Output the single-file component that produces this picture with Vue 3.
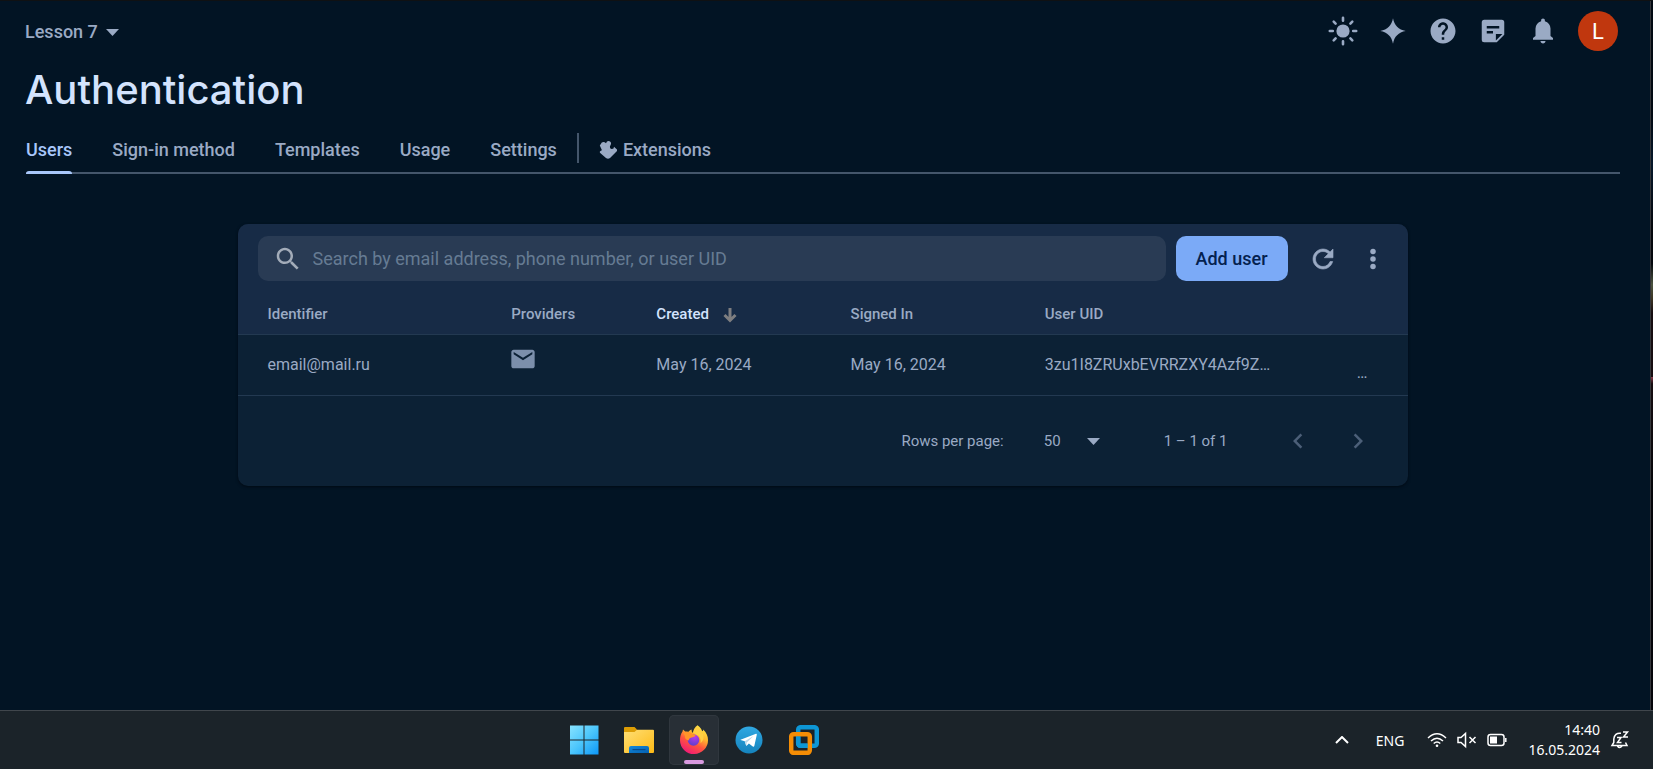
<script setup>
import { ref } from 'vue'

const tabs = ['Users', 'Sign-in method', 'Templates', 'Usage', 'Settings']
const activeTab = ref('Users')
const query = ref('')
const pageSize = ref(50)
const users = [
  { id: 'email@mail.ru', created: 'May 16, 2024', signedIn: 'May 16, 2024', uid: '3zu1I8ZRUxbEVRRZXY4Azf9Z…' },
]
</script>

<template>
  <div class="screen">
    <div class="window">
      <div class="page">
        <header class="topbar">
          <button class="project" type="button">
            Lesson 7
            <svg class="caret" viewBox="0 0 13 7" aria-hidden="true"><path d="M0 0h13L6.500 7z" /></svg>
          </button>
          <nav class="tools" aria-label="Tools">
            <button class="tool" type="button" aria-label="Theme">
              <svg viewBox="0 0 30 30">
                <circle cx="15" cy="15" r="6.600" />
                <path d="M15 1.800v3M15 25.200v3M1.800 15h3M25.200 15h3M5.700 5.700l1.900 1.900M22.400 22.400l1.900 1.900M5.700 24.300l1.900-1.900M22.400 7.600l1.900-1.900" fill="none" stroke="currentColor" stroke-width="2.600" stroke-linecap="round" />
              </svg>
            </button>
            <button class="tool" type="button" aria-label="Gemini">
              <svg viewBox="0 0 30 30"><path d="M15 2.300C16.300 9.500 20.500 13.700 27.700 15 20.500 16.300 16.300 20.500 15 27.700 13.700 20.500 9.500 16.300 2.300 15 9.500 13.700 13.700 9.500 15 2.300z" /></svg>
            </button>
            <button class="tool" type="button" aria-label="Help">
              <svg viewBox="0 0 24 24"><path d="M12 2C6.480 2 2 6.480 2 12s4.480 10 10 10 10-4.480 10-10S17.520 2 12 2zm1 17h-2v-2h2v2zm2.070-7.750l-.9.920C13.450 12.900 13 13.500 13 15h-2v-.5c0-1.100.45-2.100 1.170-2.830l1.240-1.260c.37-.36.590-.86.590-1.410 0-1.100-.9-2-2-2s-2 .9-2 2H8c0-2.210 1.790-4 4-4s4 1.790 4 4c0 .88-.36 1.680-.93 2.250z" /></svg>
            </button>
            <button class="tool" type="button" aria-label="Release notes">
              <svg viewBox="0 0 24 24"><path fill-rule="evenodd" d="M5 3h14q2 0 2 2v10l-6 6H5q-2 0-2-2V5q0-2 2-2zM7 8v2h10V8zM7 12v2h5v-2zM14.300 14.300v5.200l5.200-5.200z" /></svg>
            </button>
            <button class="tool" type="button" aria-label="Notifications">
              <svg viewBox="0 0 24 24"><path d="M4 19v-1.500l2-1.500v-6q0-2.075 1.250-3.688T10.500 4.200v-.7q0-.625.438-1.062T12 2t1.063.438T13.500 3.500v.7q2 .5 3.250 2.113T18 10v6l2 1.500V19zm8 3q-.825 0-1.412-.587T10 20h4q0 .825-.587 1.413T12 22" /></svg>
            </button>
            <button class="avatar" type="button" aria-label="Account">L</button>
          </nav>
        </header>

        <h1>Authentication</h1>

        <nav class="tabs" aria-label="Authentication sections">
          <a v-for="tab in tabs" :key="tab" href="#" class="tab" :class="{ active: tab === activeTab }" @click.prevent="activeTab = tab">{{ tab }}</a>
          <span class="divider"></span>
          <a href="#" class="tab extensions" @click.prevent>
            <svg viewBox="0 0 18 18" aria-hidden="true"><path d="M.8 4.500L2.800 1.500q2-1.500 4.200.8 1-2.800 3.500-2 2.300.9 1.200 3.400l-.7 1.500q-.5 3 2 2.800 2 0 2-2.300L18 8.500q.5 1 0 1.500L11 17q-2 1.500-4 0L1.200 12q-1-1.300.3-2 2-.3 1-1.800z" /></svg>
            Extensions
          </a>
        </nav>

        <section class="card">
          <div class="card-head">
            <label class="search">
              <svg viewBox="0 0 24 24" aria-hidden="true"><path d="M15.500 14h-.79l-.28-.27C15.410 12.590 16 11.110 16 9.500 16 5.910 13.090 3 9.500 3S3 5.910 3 9.500 5.910 16 9.500 16c1.610 0 3.090-.59 4.230-1.570l.27.28v.79l5 4.990L20.490 19l-4.990-5zm-6 0C7.010 14 5 11.990 5 9.500S7.010 5 9.500 5 14 7.010 14 9.500 11.990 14 9.500 14z" /></svg>
              <input v-model="query" type="text" aria-label="Search users" placeholder="Search by email address, phone number, or user UID" />
            </label>
            <button class="add" type="button">Add user</button>
            <button class="tool" type="button" aria-label="Refresh">
              <svg viewBox="0 0 24 24"><path stroke="currentColor" stroke-width=".5" d="M17.650 6.350C16.200 4.900 14.210 4 12 4c-4.420 0-7.990 3.580-7.990 8s3.570 8 7.990 8c3.730 0 6.840-2.550 7.730-6h-2.080c-.82 2.330-3.040 4-5.650 4-3.310 0-6-2.690-6-6s2.690-6 6-6c1.660 0 3.140.69 4.220 1.780L13 11h7V4l-2.350 2.350z" /></svg>
            </button>
            <button class="tool" type="button" aria-label="More options">
              <svg viewBox="0 0 24 24"><circle cx="12" cy="6" r="2.200" /><circle cx="12" cy="12" r="2.200" /><circle cx="12" cy="18" r="2.200" /></svg>
            </button>
          </div>

          <table>
            <colgroup>
              <col class="c-id" /><col class="c-prov" /><col class="c-date" /><col class="c-date" /><col class="c-uid" /><col />
            </colgroup>
            <thead>
              <tr>
                <th scope="col">Identifier</th>
                <th scope="col">Providers</th>
                <th scope="col" class="sorted" aria-sort="descending">
                  Created
                  <svg viewBox="0 0 14 16" aria-hidden="true"><path d="M7 1v12M1.500 8L7 13.500 12.500 8" /></svg>
                </th>
                <th scope="col">Signed In</th>
                <th scope="col">User UID</th>
                <td></td>
              </tr>
            </thead>
            <tbody>
              <tr v-for="user in users" :key="user.uid">
                <td>{{ user.id }}</td>
                <td class="provider">
                  <svg viewBox="0 0 24 24" role="img" aria-label="Email"><path d="M20 4H4c-1.100 0-2 .9-2 2v12c0 1.100.9 2 2 2h16c1.100 0 2-.9 2-2V6c0-1.100-.9-2-2-2zm0 4l-8 5-8-5V6l8 5 8-5v2z" /></svg>
                </td>
                <td>{{ user.created }}</td>
                <td>{{ user.signedIn }}</td>
                <td>{{ user.uid }}</td>
                <td class="row-actions"><button type="button" aria-label="User actions">…</button></td>
              </tr>
            </tbody>
          </table>

          <footer class="pager">
            <label for="page-size">Rows per page:</label>
            <span class="size">
              <select id="page-size" v-model="pageSize">
                <option :value="50">50</option>
                <option :value="100">100</option>
              </select>
              <svg class="caret" viewBox="0 0 13 7" aria-hidden="true"><path d="M0 0h13L6.500 7z" /></svg>
            </span>
            <span class="range">1 – 1 of 1</span>
            <button class="step" type="button" disabled aria-label="Previous page">
              <svg viewBox="0 0 24 24"><path d="M15.410 7.410L14 6l-6 6 6 6 1.410-1.410L10.830 12z" /></svg>
            </button>
            <button class="step" type="button" disabled aria-label="Next page">
              <svg viewBox="0 0 24 24"><path d="M10 6L8.590 7.410 13.170 12l-4.580 4.590L10 18l6-6z" /></svg>
            </button>
          </footer>
        </section>
      </div>
      <div class="edge"></div>
    </div>

    <footer class="taskbar">
      <nav class="apps" aria-label="Taskbar">
        <button class="app" type="button" aria-label="Start">
          <svg viewBox="0 0 30 30">
            <defs>
              <linearGradient id="win" gradientUnits="userSpaceOnUse" x1="0" y1="0" x2="30" y2="30"><stop offset="0" stop-color="#8be4ff" /><stop offset=".5" stop-color="#4cc6fc" /><stop offset="1" stop-color="#0a95f8" /></linearGradient>
            </defs>
            <path fill="url(#win)" d="M1 .5h13.500V14.500H1zM15.500 .5H29.500V14.500H15.500zM1 15.500h13.500V29.500H1zM15.500 15.500h14v14h-14z" />
          </svg>
        </button>
        <button class="app" type="button" aria-label="File Explorer">
          <svg viewBox="0 0 30 30">
            <defs>
              <linearGradient id="fold" x1="0" y1="0" x2="1" y2="1"><stop offset="0" stop-color="#ffdf75" /><stop offset="1" stop-color="#fdba16" /></linearGradient>
              <linearGradient id="tray" x1="0" y1="0" x2="1" y2="1"><stop offset="0" stop-color="#1288da" /><stop offset="1" stop-color="#0560b0" /></linearGradient>
            </defs>
            <path fill="#dc9d05" d="M0 3q0-1 1-1h9.500l2.500 2.500V10H0z" />
            <path fill="url(#fold)" d="M0 7h10.500l2.500-2.200h16q1 0 1 1V27q0 1-1 1H1q-1 0-1-1z" />
            <path fill="url(#tray)" d="M5 28v-5q0-2 2-2h16q2 0 2 2v5z" />
            <path fill="#06498c" d="M8.500 24h13v1.200h-13z" />
          </svg>
        </button>
        <button class="app running" type="button" aria-label="Firefox">
          <svg viewBox="0 0 30 30">
            <defs>
              <linearGradient id="fx" x1=".8" y1="0" x2=".25" y2="1"><stop offset="0" stop-color="#fff04c" /><stop offset=".35" stop-color="#ffb52e" /><stop offset=".62" stop-color="#ff553d" /><stop offset="1" stop-color="#f0147c" /></linearGradient>
              <radialGradient id="fxg" cx=".6" cy=".2" r=".9"><stop offset="0" stop-color="#bd3bea" /><stop offset="1" stop-color="#523fcb" /></radialGradient>
            </defs>
            <path fill="url(#fx)" d="M18.500.3C21.300 2.500 22.600 4.100 23.200 6.300q1.200-.4 1-1.800C27.700 8 29 11.200 29 15A14 13.800 0 0 1 1 15.500C1 12 1.600 9 3.500 6.500L4 4.500 6.200 6.600q1.700-.3 3.300.2Q11 4.700 12.500 4.500L13 7.500h1.200Q14.500 3 18.500.3z" />
            <circle cx="14.500" cy="15" r="5.800" fill="url(#fxg)" />
            <path fill="#ff9429" d="M4.500 8q4-2.200 8 .3l4 2q-.8 2-4.700 2.400-2 .8-2.300 2.800-4-1-3.500-4.500z" />
            <path fill="#ffd043" d="M14 7.500Q15 3.500 18.400 1.500q3.500 3 4 6l1.600 1.500q2 5-2.400 9.200.8-7-4-8.500z" />
          </svg>
        </button>
        <button class="app" type="button" aria-label="Telegram">
          <svg viewBox="0 0 30 30">
            <defs><linearGradient id="tg" x1="0" y1="0" x2="0" y2="1"><stop offset="0" stop-color="#30a8e2" /><stop offset="1" stop-color="#1583bd" /></linearGradient></defs>
            <circle cx="15" cy="15" r="13.500" fill="url(#tg)" />
            <path fill="#fff" d="M6.500 14.800L22 8.800q1-.2.800 1L20.300 21q-.4 1.200-1.500.5l-3.900-2.900-2 1.900q-.7.600-1-.4l-1.100-3.800-4.200-1.300z" />
            <path fill="#b9d9ec" d="M10.800 16.300l8.700-5.400-6.700 6.500-.5 3.300z" />
          </svg>
        </button>
        <button class="app" type="button" aria-label="VMware Workstation">
          <svg viewBox="0 0 30 30">
            <g fill="none" stroke-width="4.500">
              <rect x="9.200" y="2.200" width="18.600" height="18.600" rx="2.500" stroke="#0d96d5" />
              <rect x="2.200" y="9.200" width="18.600" height="18.600" rx="2.500" stroke="#f58d05" />
              <path d="M9.200 11.500v6.800q0 2.500 2.500 2.500H18.500" stroke="#0d96d5" />
            </g>
          </svg>
        </button>
      </nav>
      <div class="tray">
        <button class="tray-btn" type="button" aria-label="Show hidden icons">
          <svg class="chev" viewBox="0 0 14 8"><path d="M1 7l6-6 6 6" /></svg>
        </button>
        <button class="lang" type="button">ENG</button>
        <button class="tray-btn status" type="button" aria-label="Network, sound and battery">
          <svg viewBox="0 0 20 20">
            <path d="M1 8q9-8.500 18 0M4 11q6-5.500 12 0M6.700 13.500q3.300-3 6.600 0" />
            <circle cx="10" cy="15.800" r="1.300" class="solid" />
          </svg>
          <svg viewBox="0 0 20 20"><path d="M1 7.500h3l4.500-4v13l-4.500-4H1zM12.500 7l6 6M18.500 7l-6 6" /></svg>
          <svg viewBox="0 0 20 20">
            <rect x="1" y="4.500" width="16" height="11" rx="2.500" />
            <rect x="3" y="6.500" width="7" height="7" class="solid" />
            <path d="M18.800 8v4" />
          </svg>
        </button>
        <time class="clock"><span>14:40</span><span>16.05.2024</span></time>
        <button class="tray-btn" type="button" aria-label="Notifications snoozed">
          <svg viewBox="0 0 20 20">
            <path d="M11 3.200Q4.500 2.500 3.800 9v3.500L2 15.500h15L15.500 12.500M7.500 16q2 3 4.500 0M7 7.500h4L7.500 12.500h4M13 2h4.500L13.500 7h4.500" />
          </svg>
        </button>
      </div>
    </footer>
  </div>
</template>

<style>
body {
  margin: 0;
  background: #021424;
}
</style>

<style scoped>
.screen {
  min-height: 100vh;
  display: flex;
  flex-direction: column;
  font-family: Roboto, "Liberation Sans", sans-serif;
  color: #9aaac4;
}
button, input, select {
  font: inherit;
  color: inherit;
  background: none;
  border: 0;
  padding: 0;
  margin: 0;
  outline: 0;
}
a { color: inherit; text-decoration: none; }
svg { display: block; fill: currentColor; flex: none; }

.window {
  flex: 1;
  display: flex;
  background: #021424;
  border-top: 1px solid #0f1113;
}
.page { flex: 1; padding: 10px 30px 0 25px; }
.edge {
  width: 2px;
  border-left: 1px solid #34363a;
  background: linear-gradient(#020912 0, #020912 16%, #06182b 23%, #05080d 32%, #05080d 37%, #4b5340 40%, #3c3524 42%, #160d11 44%, #160d11 53%, #8c3b4c 53%, #160d11 54%, #05060a 70%);
}

.topbar { display: flex; align-items: center; justify-content: space-between; }
.project { display: flex; align-items: center; gap: 8px; padding-top: 2px; font-size: 18px; font-weight: 500; line-height: 24px; }
.caret { width: 13px; height: 7px; }
.tools { display: flex; align-items: center; gap: 10px; }
.tool { width: 40px; height: 40px; display: grid; place-items: center; }
.tool svg { width: 30px; height: 30px; }
.avatar {
  width: 40px;
  height: 40px;
  margin: 0 2px 0 5px;
  border-radius: 50%;
  background: #c0370e;
  color: #fff;
  font-size: 22px;
}

h1 {
  margin: 15px 0 9px;
  font-family: Inter, "Open Sans", sans-serif;
  font-size: 40px;
  line-height: 48px;
  font-weight: 500;
  color: #d3e3fd;
}

.tabs {
  display: flex;
  align-items: center;
  gap: 40px;
  margin-left: 1px;
  border-bottom: 2px solid #44566b;
  font-size: 18px;
  font-weight: 500;
}
.tab { position: relative; line-height: 24px; padding: 15px 0 10px; }
.active { color: #a8c7fa; }
.active::after {
  content: "";
  position: absolute;
  left: 0;
  right: 0;
  bottom: -2px;
  height: 3px;
  border-radius: 3px 3px 0 0;
  background: #a8c7fa;
}
.divider { width: 2px; height: 30px; margin: 0 -20px; background: #44566b; }
.extensions { display: flex; align-items: center; gap: 6px; }
.extensions svg { width: 18px; height: 18px; }

.card {
  max-width: 1170px;
  margin: 50px auto 0;
  border-radius: 10px;
  background: #0c2135;
  overflow: hidden;
  box-shadow: 0 1px 3px #010a14;
}
.card-head {
  display: flex;
  align-items: center;
  gap: 10px;
  padding: 12px 15px 12px 20px;
  background: #172b46;
}
.search {
  flex: 1;
  display: flex;
  align-items: center;
  gap: 10px;
  height: 45px;
  padding: 0 15px;
  border-radius: 10px;
  background: #293b54;
  color: #a3acb9;
}
.search svg { width: 30px; height: 30px; }
.search input { flex: 1; font-size: 18px; color: #d3e3fd; }
.search input::placeholder { color: #667b93; opacity: 1; }
.add {
  height: 45px;
  padding: 0 20px;
  margin-right: 5px;
  border-radius: 10px;
  background: #7baaf7;
  color: #04214f;
  font-size: 18px;
  font-weight: 500;
}

table { width: 100%; table-layout: fixed; border-collapse: collapse; }
.c-id { width: 23.4%; }
.c-prov { width: 12.4%; }
.c-date { width: 16.6%; }
.c-uid { width: 22%; }
thead tr { background: #172b46; }
th, td { padding: 0; text-align: left; white-space: nowrap; }
th:first-child, td:first-child { padding-left: 30px; }
th { height: 41px; font-size: 15px; font-weight: 500; }
thead tr, tbody tr { border-bottom: 1px solid #233951; }
.sorted { color: #d3e3fd; }
.sorted svg {
  display: inline-block;
  width: 14px;
  height: 16px;
  margin-left: 10px;
  vertical-align: text-bottom;
  fill: none;
  stroke: #7e7e80;
  stroke-width: 3;
}
tbody td { height: 58px; padding-bottom: 2px; font-size: 16px; }
.provider { vertical-align: top; }
.provider svg { width: 28px; height: 28px; margin: 10px 0 0 -2px; color: #7c8fab; }
.row-actions { text-align: right; vertical-align: bottom; }
.row-actions button { margin-right: 40px; line-height: 40px; }

.pager {
  display: flex;
  align-items: center;
  justify-content: flex-end;
  height: 90px;
  padding-right: 35px;
  font-size: 15px;
}
.size { display: flex; align-items: center; margin: 0 64px 0 40px; }
.size select { appearance: none; width: 43px; line-height: 24px; }
.range { margin-right: 55px; }
.step { width: 30px; height: 30px; color: #4c5f78; }
.step + .step { margin-left: 30px; }
.step svg { width: 30px; height: 30px; }

.taskbar {
  display: flex;
  align-items: center;
  justify-content: space-between;
  height: 58px;
  padding: 0 23px 0 559px;
  border-top: 1px solid #40464c;
  background: #1b2329;
  color: #fff;
  font-family: "Noto Sans", "Open Sans", sans-serif;
}
.apps { display: flex; gap: 5px; }
.app { width: 50px; height: 50px; display: grid; place-items: center; border-radius: 5px; }
.app svg { width: 30px; height: 30px; }
.running { position: relative; background: #282f36; box-shadow: inset 0 0 0 1px #30373e; }
.running::after {
  content: "";
  position: absolute;
  left: 15px;
  right: 15px;
  bottom: 1px;
  height: 4px;
  border-radius: 2px;
  background: #d99ae0;
}
.tray { display: flex; align-items: center; }
.tray-btn svg { width: 20px; height: 20px; fill: none; stroke: #fff; stroke-width: 1.5; }
.tray-btn .chev { width: 14px; height: 8px; stroke-width: 2; }
.tray-btn .solid { fill: #fff; stroke: none; }
.lang { margin: 0 23px 0 27px; font-size: 14px; }
.status { display: flex; gap: 10px; }
.clock { display: flex; flex-direction: column; align-items: flex-end; margin: 0 10px 0 21px; font-size: 14px; line-height: 20px; }
</style>
